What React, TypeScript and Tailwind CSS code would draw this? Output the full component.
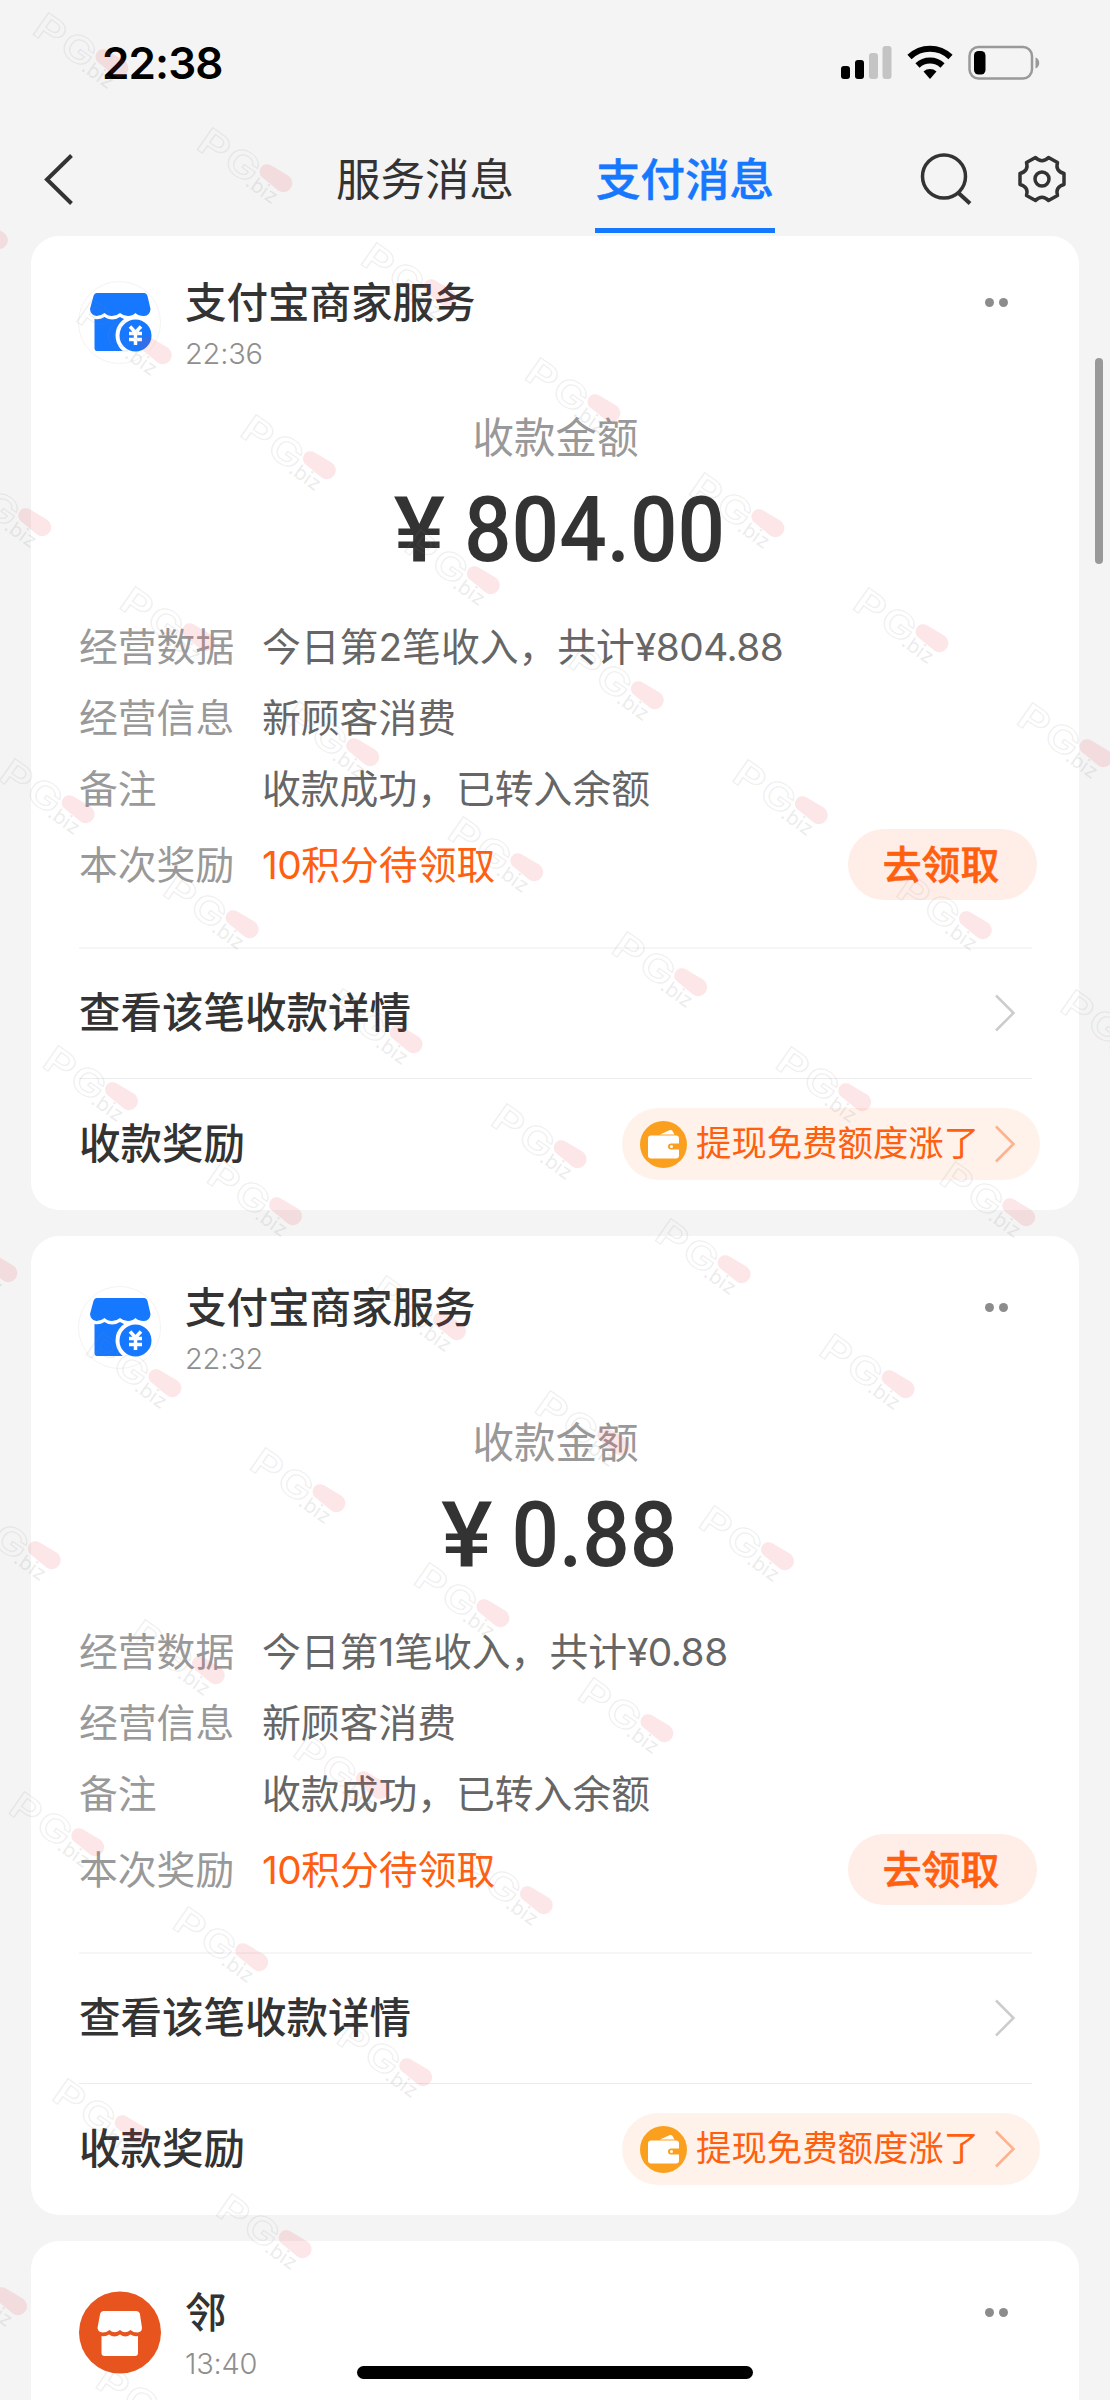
const amounts = [
  { id: 1, time: "22:36", amount: "804.00", nth: 2, total: "804.88" },
  { id: 2, time: "22:32", amount: "0.88", nth: 1, total: "0.88" },
];

// rows of repeated marks, each row shifted by (43.4, 287)
const marks: { x: number; y: number }[] = [];
for (let b = 0; b < 10; b++) {
  for (let a = -12; a + b <= 7; a++) {
    const x = 112 + a * 164 + b * 43.4;
    const y = 63 + a * 115 + b * 287;
    if (x > -20 && x < 1180 && y > -60 && y < 2470) marks.push({ x, y });
  }
}

const Watermark = () => (
  <svg
    className="pointer-events-none absolute inset-0"
    width="1110"
    height="2400"
    viewBox="0 0 1110 2400"
  >
    {marks.map(({ x, y }) => (
      <g
        key={`${x}-${y}`}
        transform={`translate(${x} ${y}) rotate(35)`}
        fontFamily="Inter, sans-serif"
        fontWeight="600"
      >
        <g fontSize="37" fill="#888" fillOpacity="0.02" stroke="#888" strokeOpacity="0.14" strokeWidth="1.200">
          <text x="-84" y="22" textLength="30" lengthAdjust="spacingAndGlyphs">
            P
          </text>
          <text x="-52" y="21" textLength="34" lengthAdjust="spacingAndGlyphs">
            G
          </text>
        </g>
        <text x="-22" y="24" fontSize="20" fontWeight="400" fill="#888" fillOpacity="0.17">
          .biz
        </text>
        <path
          d="M-11-7.500L9-9A9 9 0 0 1 9 9L-11 7.500A7.500 7.500 0 0 1-11-7.500z"
          fill="#e83c50"
          fillOpacity="0.13"
        />
      </g>
    ))}
  </svg>
);

const StatusBar = () => (
  <div className="flex h-[126px] items-center justify-between pr-[70px] pl-[102px]">
    <span className="font-[Inter] text-[44px] font-semibold tracking-[-0.9px] text-black">
      22:38
    </span>
    <svg width="199" height="36" viewBox="0 0 199 36">
      <rect x="0" y="21" width="9" height="13" rx="3" />
      <rect x="14" y="15" width="9" height="19" rx="3" />
      <rect x="28" y="8" width="9" height="26" rx="3" fill="#c4c4c4" />
      <rect x="41.500" y="1" width="9" height="33" rx="3" fill="#c4c4c4" />
      <g fill="none" stroke="#000" strokeWidth="6">
        <path d="M68.500 12a29.500 29.500 0 0 1 41 0" />
        <path d="M76.500 20.500a18 18 0 0 1 25 0" />
      </g>
      <path d="M89 34l-6.500-7.500a10 10 0 0 1 13 0z" />
      <rect x="128.500" y="2" width="62.500" height="31.500" rx="9" fill="none" stroke="#999" strokeWidth="2.500" />
      <rect x="133" y="6" width="11.500" height="23.500" rx="4.500" />
      <path d="M194.500 12.500c5 1.500 5 9.500 0 11z" fill="#999" />
    </svg>
  </div>
);

const Header = () => (
  <header className="flex h-[110px] items-start pr-[43px] pl-[42px]">
    <svg className="mt-[27px]" width="32" height="52" viewBox="0 0 32 52" fill="none" stroke="#333" strokeWidth="4">
      <path d="M29.500 2.500L5 26.500l24.500 24" />
    </svg>
    <nav className="ml-[262px] flex gap-[83px] text-[44.500px]">
      <span className="h-[107px] w-[176px] pt-[21px] leading-[67px] whitespace-nowrap text-[#333]">服务消息</span>
      <span className="h-[107px] w-[180px] border-b-[5px] border-[#1677ff] pt-[21px] text-center leading-[67px] font-medium whitespace-nowrap text-[#1677ff] [-webkit-text-stroke:0.5px]">
        支付消息
      </span>
    </nav>
    <div className="mt-[24px] ml-auto flex gap-[45px]">
      <svg width="54" height="56" viewBox="0 0 54 56" fill="none" stroke="#333" strokeWidth="3.500">
        <circle cx="26" cy="26.500" r="21.500" />
        <path d="M40 42.500l12 11" strokeWidth="4" />
      </svg>
      <svg width="50" height="56" viewBox="-25 -29 50 56" fill="none" stroke="#333" strokeWidth="3.500" strokeLinejoin="round">
        <path d="M-6.500-21.500Q0-15 6.500-21.500L15.500-16.500Q13-8 22-5.500V5.500Q13 8 15.500 16.500L6.500 21.500Q0 15-6.500 21.500L-15.500 16.500Q-13 8-22 5.500V-5.500Q-13-8-15.500-16.500Z" />
        <circle r="7" />
      </svg>
    </div>
  </header>
);

const Arrow = ({ color }: { color: string }) => (
  <svg className="shrink-0" width="22" height="38" viewBox="0 0 22 38" fill="none" stroke={color} strokeWidth="2.500">
    <path d="M2 1.500L19.500 19 2 36.500" />
  </svg>
);

const ShopIcon = () => (
  <svg className="-ml-px size-[83px] shrink-0" viewBox="0 0 83 83">
    <circle cx="41.500" cy="41.500" r="41" fill="#fff" stroke="#f3f3f3" />
    <path
      fill="#1677ff"
      d="M19 12H66q2.500 0 3.500 3L72.500 28Q72 34.500 66 35Q60 35 57.500 32Q54.500 35 50 35T42 32Q38.500 35 34 35T26.500 32Q23 35 18.500 35Q12.500 34 12 28L15.500 15q1-3 3.500-3z"
    />
    <path fill="#1677ff" d="M16.500 38Q22 39 26.500 36Q34 41 42 36Q50 41 57.500 36L66 38V70H19q-2.500 0-2.500-3z" />
    <path fill="#fff" d="M57 36h14V72H57z" />
    <circle cx="57.500" cy="54.500" r="18" fill="#1677ff" stroke="#fff" strokeWidth="4" />
    <path d="M52 45.500l5.500 6 5.500-6M51 52.500h13M51 58.500h13M57.500 51.500v12.500" fill="none" stroke="#fff" strokeWidth="3.500" />
  </svg>
);

const StoreIcon = () => (
  <svg className="-ml-px size-[83px] shrink-0" viewBox="0 0 83 83">
    <circle cx="42" cy="41.500" r="41" fill="#e8541e" />
    <path
      fill="#fff"
      d="M26 20H58q3.500 0 4 3.500L64 37q0 4-4.500 4.500Q55 41.500 52.500 39Q47 43.500 42 39Q36.500 43.500 31.500 39Q28.500 41.500 24.500 41.500Q20 41 19.500 37L22 23.500q.5-3.500 4-3.500z"
    />
    <path fill="#fff" d="M23.500 45Q28 46 31 43.500Q36.500 47.500 42 43.500Q47.500 47.500 52.500 43.500Q56 46 60 45V62q0 3-3 3H26.500q-3 0-3-3z" />
  </svg>
);

const WalletIcon = () => (
  <svg className="shrink-0" width="47" height="47" viewBox="0 0 47 47">
    <circle cx="23.500" cy="23.500" r="23.500" fill="#faa01e" />
    <path fill="#fff" d="M20 13.500l10-4.500q1.500-.5 2.500 1l2 3.500z" />
    <path
      fill="#fff"
      d="M11 14.500H36q3 0 3 3V22.500H31a3 3 0 0 0 0 6h8V34.500q0 3-3 3H11q-3 0-3-3V17.500q0-3 3-3z"
    />
    <circle cx="31.500" cy="25.500" r="1.500" fill="#fff" />
  </svg>
);

const CardHead = ({ title, time, store }: { title: string; time: string; store?: boolean }) => (
  <div className="flex h-[83px] items-start">
    {store ? <StoreIcon /> : <ShopIcon />}
    <div className="ml-[24px] flex-1 pt-px">
      <h2 className="text-[41.500px] leading-[42px] font-medium text-[#333]">{title}</h2>
      <p className="mt-[15px] font-[Inter] text-[29px] leading-[30px] font-light tracking-[-0.2px] text-[#8f8f8f]">
        {time}
      </p>
    </div>
    <div className="mt-[17px] mr-[24px] flex gap-[5px]">
      <i className="size-[9px] rounded-full bg-[#8c8c8c]" />
      <i className="size-[9px] rounded-full bg-[#8c8c8c]" />
    </div>
  </div>
);

const MessageCard = ({ item, first }: { item: (typeof amounts)[0]; first: boolean }) => {
  const { time, amount, nth, total } = item;
  return (
    <section
      className={`rounded-[28px] bg-white pr-[47px] pl-[48px] ${first ? "h-[974px] pt-[45px]" : "h-[979px] pt-[50px]"}`}
    >
      <CardHead title="支付宝商家服务" time={time} />
      <p className="mt-[53px] text-center text-[41.500px] leading-[42px] text-[#999]">收款金额</p>
      <div className="mt-[20px] flex h-[104px] items-center justify-center pl-[7px] text-[#333]">
        <div className="flex scale-x-[0.93] gap-[28px] font-[Roboto] text-[90px] leading-[104px] font-medium">
          <span className="origin-left scale-x-[1.16]">¥</span>
          <span>{amount}</span>
        </div>
      </div>
      <dl className="mt-[28px] text-[38.800px] leading-[71px] [&_dt]:w-[183px] [&_dt]:text-[#999]">
        <div className="flex text-[#666]">
          <dt>经营数据</dt>
          <dd>
            今日第{nth}笔收入，共计<span className="tracking-[-0.5px]">¥{total}</span>
          </dd>
        </div>
        <div className="flex text-[#666]">
          <dt>经营信息</dt>
          <dd>新顾客消费</dd>
        </div>
        <div className="flex text-[#666]">
          <dt>备注</dt>
          <dd>收款成功，已转入余额</dd>
        </div>
        <div className="mt-[5px] flex">
          <dt>本次奖励</dt>
          <dd className="flex-1 text-[#ff6010]">
            <span className="tracking-[-0.5px]">10</span>积分待领取
          </dd>
          <button className="-mr-[5px] h-[71px] w-[189px] rounded-full bg-[#ffeee8] pr-[3px] text-[38.800px] leading-[69px] font-medium text-[#ff6010] [-webkit-text-stroke:0.6px]">
            去领取
          </button>
        </div>
      </dl>
      <div className="mt-[47px] flex h-[131px] items-center justify-between border-t-2 border-[#f6f6f6] pr-[16px] pb-px text-[41.500px] font-medium text-[#333]">
        查看该笔收款详情
        <Arrow color="#ccc" />
      </div>
      <div className="flex h-[132px] items-center justify-between border-t border-[#ececec] text-[41.500px] font-medium text-[#333]">
        收款奖励
        <div className="-mr-[8px] mb-px flex h-[72px] w-[418px] items-center rounded-full bg-[#fff2eb] pl-[18px] text-[35.400px] font-normal text-[#ff6010]">
          <WalletIcon />
          <span className="mr-[15px] ml-[9px] whitespace-nowrap">提现免费额度涨了</span>
          <Arrow color="#ffb08c" />
        </div>
      </div>
    </section>
  );
};

const App = () => {
  return (
    <main className="relative h-[2400px] w-[1110px] overflow-hidden bg-[#f4f4f4] font-[Inter,'Noto_Sans_CJK_SC',sans-serif]">
      <StatusBar />
      <Header />
      <div className="flex flex-col gap-[26px] px-[31px]">
        {amounts.map((item, i) => (
          <MessageCard key={item.id} item={item} first={i === 0} />
        ))}
        <section className="h-[200px] rounded-[28px] bg-white pr-[47px] pl-[48px] pt-[50px]">
          <CardHead title="邻" time="13:40" store />
        </section>
      </div>
      <div className="absolute top-[358px] right-[7px] h-[206px] w-[8px] rounded-full bg-[#999]" />
      <div className="absolute top-[2366px] left-[357px] h-[13px] w-[396px] rounded-full bg-black" />
      <Watermark />
    </main>
  );
};

export default App;
